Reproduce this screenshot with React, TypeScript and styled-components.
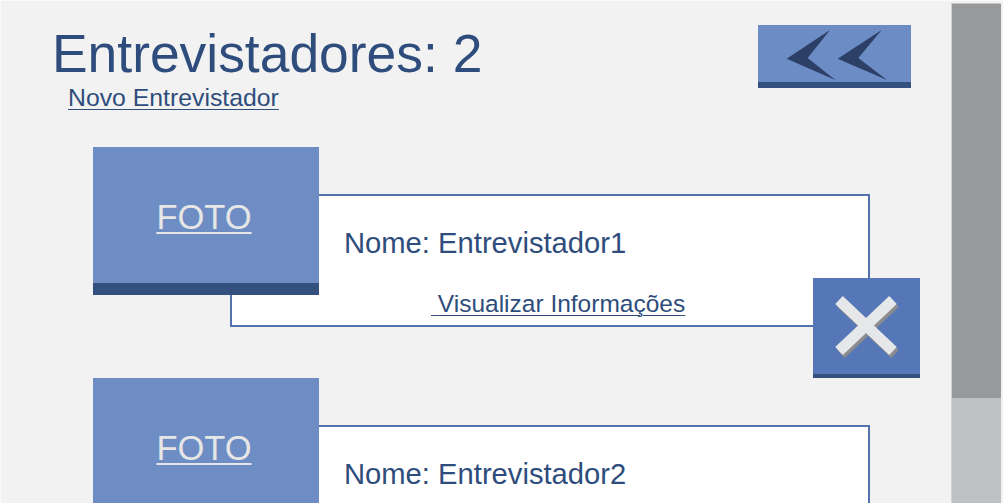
import React from "react";
import styled, { createGlobalStyle } from "styled-components";

const interviewers = [
  { id: 1, name: "Entrevistador1" },
  { id: 2, name: "Entrevistador2" },
];

const App = () => {
  return (
    <>
      <GlobalStyle />
      <Screen>
        <Main>
          <Header>
            <TitleBlock>
              <Title>Entrevistadores: {interviewers.length}</Title>
              <NewLink href="#">Novo Entrevistador</NewLink>
            </TitleBlock>
            <BackButton aria-label="Voltar">
              <svg width="153" height="57" viewBox="0 0 153 57">
                <polygon points="72,5 28.7,33.7 77.3,55 49.7,33" fill="#2c3f66" />
                <polygon points="123.7,5 79.7,33.7 129,55 100.3,33" fill="#2c3f66" />
              </svg>
            </BackButton>
          </Header>

          <CardList>
            {interviewers.map((item) => (
              <Card key={item.id}>
                <Photo>
                  <PhotoLabel>FOTO</PhotoLabel>
                </Photo>
                <InfoBox>
                  <Name>Nome: {item.name}</Name>
                  <InfoLink href="#">{"\u00a0"}Visualizar Informações</InfoLink>
                </InfoBox>
                <DeleteButton aria-label="Excluir">
                  <svg width="107" height="96" viewBox="0 0 107 96">
                    <g stroke="#8b8c8e" strokeWidth="11" transform="translate(2 3)">
                      <line x1="26" y1="22" x2="80" y2="73" />
                      <line x1="80" y1="22" x2="26" y2="73" />
                    </g>
                    <g stroke="#e6e7e8" strokeWidth="11">
                      <line x1="26" y1="22" x2="80" y2="73" />
                      <line x1="80" y1="22" x2="26" y2="73" />
                    </g>
                  </svg>
                </DeleteButton>
              </Card>
            ))}
          </CardList>
        </Main>

        <ScrollBar>
          <Thumb />
          <Track />
        </ScrollBar>
      </Screen>
    </>
  );
};

// Styled components

const GlobalStyle = createGlobalStyle`
  html, body {
    margin: 0;
    padding: 0;
    background: #f2f2f2;
  }
  body {
    font-family: "Liberation Sans", Arial, sans-serif;
  }
`;

const Screen = styled.div`
  display: flex;
  height: 503px;
  overflow: hidden;
  background: #f2f2f2;
  border-top: 1px solid #fafafa;
  border-left: 1px solid #fafafa;
  box-sizing: border-box;
`;

const Main = styled.div`
  flex: 1;
  padding: 22px 40px 0 48px;
  min-width: 0;
`;

const Header = styled.div`
  display: flex;
  justify-content: space-between;
  align-items: flex-start;
`;

const TitleBlock = styled.div`
  display: flex;
  flex-direction: column;
  align-items: flex-start;
`;

const Title = styled.h1`
  margin: 0 0 0 3px;
  font-size: 53.4px;
  font-weight: normal;
  line-height: 1.16;
  color: #2e4d7c;
`;

const NewLink = styled.a`
  margin: -1px 0 0 19px;
  font-size: 24.8px;
  line-height: 1.15;
  color: #2e4d7c;
  text-decoration: underline;
  text-decoration-thickness: 1px;
  text-underline-offset: 3px;
`;

const BackButton = styled.button`
  display: flex;
  width: 153px;
  height: 63px;
  margin-top: 2px;
  padding: 0;
  border: none;
  border-bottom: 6px solid #34507f;
  background: #6b8cc4;
  cursor: pointer;
`;

const CardList = styled.div`
  display: flex;
  flex-direction: column;
  margin: 35px 0 0 44px;
`;

const Card = styled.div`
  display: grid;
  grid-template-columns: 137px 89px 494px 57px 50px;
  grid-template-rows: 47px 84px 17px 32px 51px;
`;

const Photo = styled.div`
  grid-column: 1 / 3;
  grid-row: 1 / 4;
  z-index: 2;
  display: flex;
  align-items: center;
  justify-content: center;
  padding: 5px 4px 0 0;
  background: #6d8dc4;
  border-bottom: 12px solid #34507f;
`;

const PhotoLabel = styled.span`
  font-size: 34.5px;
  line-height: 1.15;
  color: #e6e6e6;
  text-decoration: underline;
  text-decoration-thickness: 2px;
  text-underline-offset: 3px;
`;

const InfoBox = styled.div`
  grid-column: 2 / 5;
  grid-row: 2 / 5;
  z-index: 1;
  display: flex;
  flex-direction: column;
  align-items: flex-start;
  padding: 31px 0 0 0;
  background: #ffffff;
  border: 2px solid #5271ad;
`;

const Name = styled.div`
  margin-left: 112px;
  font-size: 29.2px;
  line-height: 1.15;
  color: #2e4d7c;
`;

const InfoLink = styled.a`
  margin: 29px 0 0 199px;
  font-size: 24.5px;
  line-height: 1.15;
  color: #2e4d7c;
  text-decoration: underline;
  text-decoration-thickness: 1px;
  text-underline-offset: 3px;
`;

const DeleteButton = styled.button`
  grid-column: 4 / 6;
  grid-row: 3 / 6;
  z-index: 3;
  display: flex;
  padding: 0;
  border: none;
  border-bottom: 4px solid #34507f;
  background: #5577b8;
  cursor: pointer;
`;

const ScrollBar = styled.div`
  display: flex;
  flex-direction: column;
  width: 52px;
  padding: 2px 2px 0 0;
  box-sizing: border-box;
`;

const Thumb = styled.div`
  height: 395px;
  background: #98999b;
  border-top: 1px solid #c6c6c7;
  border-left: 1px solid #d3d3d4;
  box-sizing: border-box;
`;

const Track = styled.div`
  flex: 1;
  background: #bfc0c2;
  border-left: 1px solid #d3d3d4;
`;

export default App;
